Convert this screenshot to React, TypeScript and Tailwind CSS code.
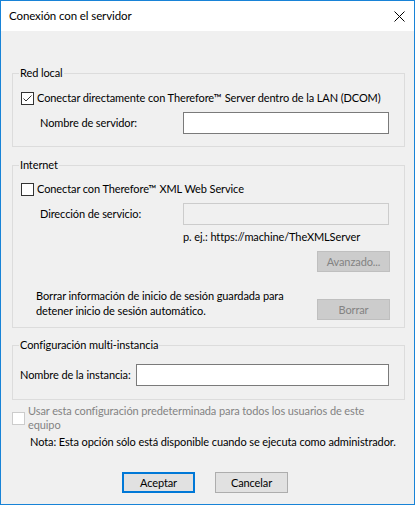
import React from "react";

function CheckBox({ checked, disabled }: { checked?: boolean; disabled?: boolean }) {
  return (
    <div
      className={`w-[13px] h-[13px] shrink-0 border bg-white flex items-center justify-center ${
        disabled ? "border-[#cccccc]" : "border-[#333333]"
      }`}
    >
      {checked && (
        <svg width="11" height="11" viewBox="0 0 11 11">
          <polyline points="1.5,5.5 4,8 9.5,2.5" fill="none" stroke="#333333" strokeWidth="1" />
        </svg>
      )}
    </div>
  );
}

function Btn({ label, kind }: { label: string; kind: "normal" | "default" | "disabled" }) {
  const cls =
    kind === "default"
      ? "border-2 border-[#0078d7] bg-[#e1e1e1] text-black"
      : kind === "disabled"
      ? "border border-[#bfbfbf] bg-[#cccccc] text-[#838383]"
      : "border border-[#adadad] bg-[#e1e1e1] text-black";
  return (
    <div className={`w-[73px] h-[21px] shrink-0 flex items-center justify-center leading-[16px] ${cls}`}>
      {label}
    </div>
  );
}

export default function App() {
  return (
    <div
      className="w-[415px] h-[505px] border border-[#1883d7] bg-[#f0f0f0] flex flex-col text-[11px] tracking-[-0.1px] leading-[16px] text-black whitespace-nowrap"
      style={{ fontFamily: 'Lato, "Liberation Sans", sans-serif' }}
    >
      <div className="h-[30px] shrink-0 bg-white flex items-center justify-between pl-[8px] pr-[9px]">
        <span className="text-[11.5px]">Conexión con el servidor</span>
        <svg width="11" height="11" viewBox="0 0 11 11">
          <line x1="0.5" y1="0.5" x2="10.5" y2="10.5" stroke="#000" strokeWidth="1" />
          <line x1="10.5" y1="0.5" x2="0.5" y2="10.5" stroke="#000" strokeWidth="1" />
        </svg>
      </div>

      <div className="flex flex-col pl-[11px] pr-[9px]">
        <fieldset className="mt-[34px] border border-[#dcdcdc] flex flex-col pb-[12px]">
          <legend className="ml-[6px] px-[1px] leading-[16px]">Red local</legend>
          <div className="mt-[9px] h-[16px] flex items-center pl-[8px] gap-[3px]">
            <CheckBox checked />
            <span>Conectar directamente con Therefore™ Server dentro de la LAN (DCOM)</span>
          </div>
          <div className="mt-[6px] flex items-center pl-[27px]">
            <span className="w-[143px]">Nombre de servidor:</span>
            <div className="w-[206px] h-[22px] border border-[#7a7a7a] bg-white" />
          </div>
        </fieldset>

        <fieldset className="mt-[10px] border border-[#dcdcdc] flex flex-col pb-[7px]">
          <legend className="ml-[6px] px-[1px] leading-[16px]">Internet</legend>
          <div className="mt-[8px] h-[16px] flex items-center pl-[8px] gap-[3px]">
            <CheckBox />
            <span>Conectar con Therefore™ XML Web Service</span>
          </div>
          <div className="mt-[6px] flex items-center pl-[27px]">
            <span className="w-[143px]">Dirección de servicio:</span>
            <div className="w-[206px] h-[22px] border border-[#cccccc] bg-[#f0f0f0]" />
          </div>
          <div className="mt-[4px] pl-[170px]">p. ej.: https://machine/TheXMLServer</div>
          <div className="mt-[6px] flex justify-end pr-[14px]">
            <Btn label="Avanzado..." kind="disabled" />
          </div>
          <div className="mt-[16px] flex items-start justify-between pl-[23px] pr-[14px]">
            <div className="leading-[15px]">
              Borrar información de inicio de sesión guardada para
              <br />
              detener inicio de sesión automático.
            </div>
            <div className="mt-[11px]">
              <Btn label="Borrar" kind="disabled" />
            </div>
          </div>
        </fieldset>

        <fieldset className="mt-[9px] border border-[#dcdcdc] flex flex-col pb-[13px]">
          <legend className="ml-[6px] px-[1px] leading-[16px]">Configuración multi-instancia</legend>
          <div className="mt-[11px] flex items-center pl-[7px]">
            <span className="w-[116px]">Nombre de la instancia:</span>
            <div className="w-[253px] h-[22px] border border-[#7a7a7a] bg-white" />
          </div>
        </fieldset>

        <div className="mt-[4px] flex items-center gap-[3px]">
          <CheckBox disabled />
          <div className="leading-[14px] text-[#838383]">
            Usar esta configuración predeterminada para todos los usuarios de este
            <br />
            equipo
          </div>
        </div>
        <div className="mt-[2px] pl-[18px]">
          Nota: Esta opción sólo está disponible cuando se ejecuta como administrador.
        </div>

        <div className="mt-[22px] flex gap-[20px] pl-[110px]">
          <Btn label="Aceptar" kind="default" />
          <Btn label="Cancelar" kind="normal" />
        </div>
      </div>
    </div>
  );
}
